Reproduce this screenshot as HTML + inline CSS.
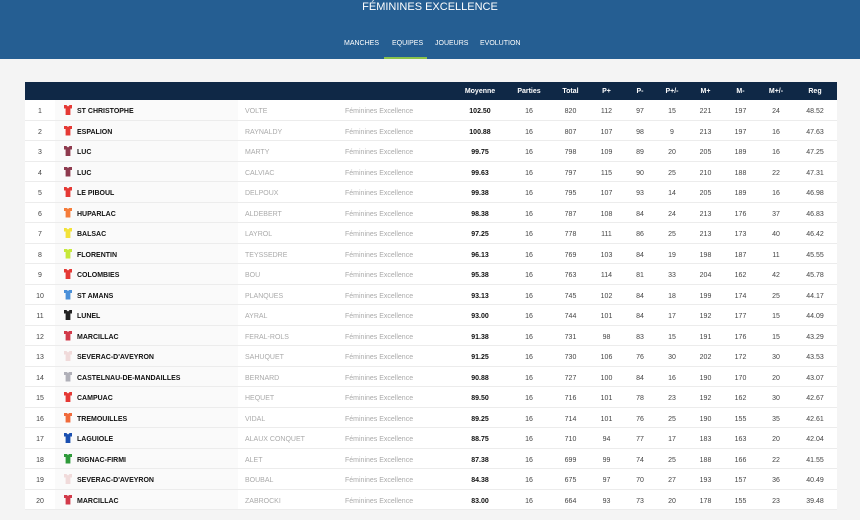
<!DOCTYPE html>
<html><head><meta charset="utf-8"><style>
*{margin:0;padding:0;box-sizing:border-box}
body{width:860px;height:520px;overflow:hidden;background:#f4f4f4;font-family:"Liberation Sans",sans-serif;position:relative}
.top{position:absolute;left:0;top:0;width:860px;height:59px;background:#255e92}
.title{position:absolute;top:1px;width:860px;text-align:center;color:#fff;font-size:11px;line-height:13px}
.nav{position:absolute;top:40px;left:0;width:860px;color:#fff;font-size:7px}
.nav span{position:absolute}
.ul{position:absolute;left:384px;top:57px;width:43px;height:2px;background:#8bc34a}
table{position:absolute;left:25px;top:82px;width:812px;border-collapse:collapse;table-layout:fixed;background:#fff;font-size:7px;color:#444}
thead tr{background:#0f2846;height:18px;color:#fff;font-weight:bold}
tbody tr{border-bottom:1px solid #ececec}
td,th{text-align:center;white-space:nowrap;overflow:hidden;padding:0;vertical-align:middle}
td{line-height:15.5px;padding-top:4px}
td.t{text-align:left;font-weight:bold;color:#111;background:#fafafa;padding-left:9px}
td.n,td.d{text-align:left;color:#aaa;padding-left:7px}
td.m{font-weight:bold;color:#111}
.j{display:inline-block;width:8px;height:10px;vertical-align:-2px;margin-right:5px;clip-path:polygon(0 0,30% 0,50% 15%,70% 0,100% 0,100% 35%,80% 35%,80% 100%,20% 100%,20% 35%,0 35%)}
</style></head><body>
<div class="top"></div>
<div class="title">FÉMININES EXCELLENCE</div>
<div class="nav"><span style="left:344px">MANCHES</span><span style="left:392px">EQUIPES</span><span style="left:435px">JOUEURS</span><span style="left:480px">EVOLUTION</span></div>
<div class="ul"></div>
<table>
<colgroup><col style="width:30px"><col style="width:183px"><col style="width:100px"><col style="width:117px"><col style="width:50px"><col style="width:48px"><col style="width:35px"><col style="width:37px"><col style="width:30px"><col style="width:34px"><col style="width:33px"><col style="width:37px"><col style="width:34px"><col style="width:44px"></colgroup>
<thead><tr><th></th><th></th><th></th><th></th><th>Moyenne</th><th>Parties</th><th>Total</th><th>P+</th><th>P-</th><th>P+/-</th><th>M+</th><th>M-</th><th>M+/-</th><th>Reg</th></tr></thead>
<tbody>
<tr><td>1</td><td class="t"><i class="j" style="background:#e53935"></i>ST CHRISTOPHE</td><td class="n">VOLTE</td><td class="d">Féminines Excellence</td><td class="m">102.50</td><td>16</td><td>820</td><td>112</td><td>97</td><td>15</td><td>221</td><td>197</td><td>24</td><td>48.52</td></tr>
<tr><td>2</td><td class="t"><i class="j" style="background:#e53935"></i>ESPALION</td><td class="n">RAYNALDY</td><td class="d">Féminines Excellence</td><td class="m">100.88</td><td>16</td><td>807</td><td>107</td><td>98</td><td>9</td><td>213</td><td>197</td><td>16</td><td>47.63</td></tr>
<tr><td>3</td><td class="t"><i class="j" style="background:#8e3a4e"></i>LUC</td><td class="n">MARTY</td><td class="d">Féminines Excellence</td><td class="m">99.75</td><td>16</td><td>798</td><td>109</td><td>89</td><td>20</td><td>205</td><td>189</td><td>16</td><td>47.25</td></tr>
<tr><td>4</td><td class="t"><i class="j" style="background:#8e3a4e"></i>LUC</td><td class="n">CALVIAC</td><td class="d">Féminines Excellence</td><td class="m">99.63</td><td>16</td><td>797</td><td>115</td><td>90</td><td>25</td><td>210</td><td>188</td><td>22</td><td>47.31</td></tr>
<tr><td>5</td><td class="t"><i class="j" style="background:#e53935"></i>LE PIBOUL</td><td class="n">DELPOUX</td><td class="d">Féminines Excellence</td><td class="m">99.38</td><td>16</td><td>795</td><td>107</td><td>93</td><td>14</td><td>205</td><td>189</td><td>16</td><td>46.98</td></tr>
<tr><td>6</td><td class="t"><i class="j" style="background:#f57c3a"></i>HUPARLAC</td><td class="n">ALDEBERT</td><td class="d">Féminines Excellence</td><td class="m">98.38</td><td>16</td><td>787</td><td>108</td><td>84</td><td>24</td><td>213</td><td>176</td><td>37</td><td>46.83</td></tr>
<tr><td>7</td><td class="t"><i class="j" style="background:#f2e23a"></i>BALSAC</td><td class="n">LAYROL</td><td class="d">Féminines Excellence</td><td class="m">97.25</td><td>16</td><td>778</td><td>111</td><td>86</td><td>25</td><td>213</td><td>173</td><td>40</td><td>46.42</td></tr>
<tr><td>8</td><td class="t"><i class="j" style="background:#c6e83a"></i>FLORENTIN</td><td class="n">TEYSSEDRE</td><td class="d">Féminines Excellence</td><td class="m">96.13</td><td>16</td><td>769</td><td>103</td><td>84</td><td>19</td><td>198</td><td>187</td><td>11</td><td>45.55</td></tr>
<tr><td>9</td><td class="t"><i class="j" style="background:#e53935"></i>COLOMBIES</td><td class="n">BOU</td><td class="d">Féminines Excellence</td><td class="m">95.38</td><td>16</td><td>763</td><td>114</td><td>81</td><td>33</td><td>204</td><td>162</td><td>42</td><td>45.78</td></tr>
<tr><td>10</td><td class="t"><i class="j" style="background:#4a90d9"></i>ST AMANS</td><td class="n">PLANQUES</td><td class="d">Féminines Excellence</td><td class="m">93.13</td><td>16</td><td>745</td><td>102</td><td>84</td><td>18</td><td>199</td><td>174</td><td>25</td><td>44.17</td></tr>
<tr><td>11</td><td class="t"><i class="j" style="background:#222"></i>LUNEL</td><td class="n">AYRAL</td><td class="d">Féminines Excellence</td><td class="m">93.00</td><td>16</td><td>744</td><td>101</td><td>84</td><td>17</td><td>192</td><td>177</td><td>15</td><td>44.09</td></tr>
<tr><td>12</td><td class="t"><i class="j" style="background:#d23a4a"></i>MARCILLAC</td><td class="n">FERAL-ROLS</td><td class="d">Féminines Excellence</td><td class="m">91.38</td><td>16</td><td>731</td><td>98</td><td>83</td><td>15</td><td>191</td><td>176</td><td>15</td><td>43.29</td></tr>
<tr><td>13</td><td class="t"><i class="j" style="background:#f0dada"></i>SEVERAC-D'AVEYRON</td><td class="n">SAHUQUET</td><td class="d">Féminines Excellence</td><td class="m">91.25</td><td>16</td><td>730</td><td>106</td><td>76</td><td>30</td><td>202</td><td>172</td><td>30</td><td>43.53</td></tr>
<tr><td>14</td><td class="t"><i class="j" style="background:#b0b0b8"></i>CASTELNAU-DE-MANDAILLES</td><td class="n">BERNARD</td><td class="d">Féminines Excellence</td><td class="m">90.88</td><td>16</td><td>727</td><td>100</td><td>84</td><td>16</td><td>190</td><td>170</td><td>20</td><td>43.07</td></tr>
<tr><td>15</td><td class="t"><i class="j" style="background:#e53935"></i>CAMPUAC</td><td class="n">HEQUET</td><td class="d">Féminines Excellence</td><td class="m">89.50</td><td>16</td><td>716</td><td>101</td><td>78</td><td>23</td><td>192</td><td>162</td><td>30</td><td>42.67</td></tr>
<tr><td>16</td><td class="t"><i class="j" style="background:#f06a3a"></i>TREMOUILLES</td><td class="n">VIDAL</td><td class="d">Féminines Excellence</td><td class="m">89.25</td><td>16</td><td>714</td><td>101</td><td>76</td><td>25</td><td>190</td><td>155</td><td>35</td><td>42.61</td></tr>
<tr><td>17</td><td class="t"><i class="j" style="background:#1a4fb0"></i>LAGUIOLE</td><td class="n">ALAUX CONQUET</td><td class="d">Féminines Excellence</td><td class="m">88.75</td><td>16</td><td>710</td><td>94</td><td>77</td><td>17</td><td>183</td><td>163</td><td>20</td><td>42.04</td></tr>
<tr><td>18</td><td class="t"><i class="j" style="background:#2e9a3a"></i>RIGNAC-FIRMI</td><td class="n">ALET</td><td class="d">Féminines Excellence</td><td class="m">87.38</td><td>16</td><td>699</td><td>99</td><td>74</td><td>25</td><td>188</td><td>166</td><td>22</td><td>41.55</td></tr>
<tr><td>19</td><td class="t"><i class="j" style="background:#f0dada"></i>SEVERAC-D'AVEYRON</td><td class="n">BOUBAL</td><td class="d">Féminines Excellence</td><td class="m">84.38</td><td>16</td><td>675</td><td>97</td><td>70</td><td>27</td><td>193</td><td>157</td><td>36</td><td>40.49</td></tr>
<tr><td>20</td><td class="t"><i class="j" style="background:#d23a4a"></i>MARCILLAC</td><td class="n">ZABROCKI</td><td class="d">Féminines Excellence</td><td class="m">83.00</td><td>16</td><td>664</td><td>93</td><td>73</td><td>20</td><td>178</td><td>155</td><td>23</td><td>39.48</td></tr>
</tbody></table>
</body></html>
